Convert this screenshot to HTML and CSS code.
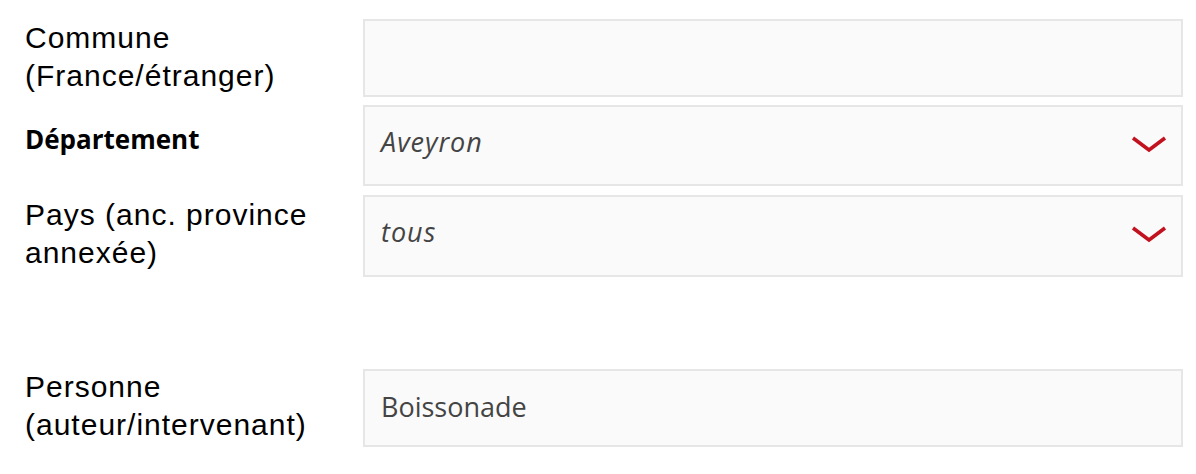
FILE: index.html
```html
<!DOCTYPE html>
<html lang="fr">
<head>
<meta charset="utf-8">
<title>Recherche</title>
<link rel="stylesheet" href="styles.css">
</head>
<body>
<form class="form">
  <div class="row row-commune">
    <label class="label">Commune<br>(France/étranger)</label>
    <div class="field"></div>
  </div>
  <div class="row row-dept">
    <label class="label label-bold">Département</label>
    <div class="field select"><span class="value italic">Aveyron</span>
      <svg class="chev" width="36" height="20" viewBox="0 0 36 20"><path d="M2 4 L18 16 L34 4" fill="none" stroke="#c2121f" stroke-width="3.6"/></svg>
    </div>
  </div>
  <div class="row row-pays">
    <label class="label">Pays (anc. province<br>annexée)</label>
    <div class="field select"><span class="value italic">tous</span>
      <svg class="chev" width="36" height="20" viewBox="0 0 36 20"><path d="M2 4 L18 16 L34 4" fill="none" stroke="#c2121f" stroke-width="3.6"/></svg>
    </div>
  </div>
  <div class="row row-personne">
    <label class="label">Personne<br>(auteur/intervenant)</label>
    <div class="field"><span class="value">Boissonade</span></div>
  </div>
</form>
</body>
</html>
```
FILE: styles.css
```css
html, body { margin: 0; padding: 0; background: #fff; }
.form {
  display: flex;
  flex-direction: column;
  padding: 19px 0 0 25px;
}
.row {
  display: flex;
  align-items: flex-start;
}
.label {
  width: 338px;
  flex: none;
  font-family: "Liberation Sans", Arial, sans-serif;
  font-size: 30px;
  letter-spacing: 1px;
  line-height: 38px;
  color: #000;
}
.label-bold {
  font-family: "Open Sans", sans-serif;
  font-weight: 700;
  font-size: 26px;
  letter-spacing: 0;
  line-height: 30px;
  padding-top: 19px;
}
.field {
  width: 820px;
  box-sizing: border-box;
  border: 2px solid #e6e6e6;
  background: #fafafa;
  display: flex;
  align-items: center;
  padding: 0 14px 4px 16px;
  justify-content: space-between;
}
.select { padding-bottom: 9px; }
.value {
  font-family: "Open Sans", sans-serif;
  font-size: 27px;
  color: #444;
}
.italic { font-style: italic; letter-spacing: 1px; }
.chev { flex: none; margin-top: 5px; }
.row-commune .field { height: 78px; }
.row-commune { margin-bottom: 8px; }
.row-dept .field { height: 81px; }
.row-dept { margin-bottom: 9px; }
.row-pays .field { height: 82px; }
.row-pays .label { padding-top: 1px; }
.row-pays { margin-bottom: 92px; }
.row-personne .field { height: 78px; }
.row-personne .label { margin-top: -1px; }
```
